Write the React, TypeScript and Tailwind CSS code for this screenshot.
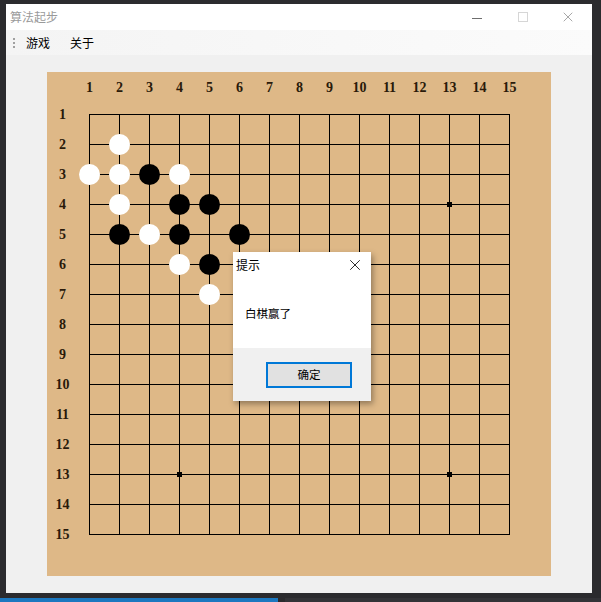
import { X } from 'lucide-react';

const cjk = "font-['Microsoft_YaHei','Noto_Sans_CJK_SC',sans-serif]";

const whites: [number, number][] = [
  [2, 2], [1, 3], [2, 3], [4, 3], [2, 4], [3, 5], [4, 6], [5, 7],
];
const blacks: [number, number][] = [
  [3, 3], [4, 4], [5, 4], [2, 5], [4, 5], [6, 5], [5, 6],
];
const stars: [number, number][] = [
  [4, 4], [13, 4], [8, 8], [4, 13], [13, 13],
];

const pos = (n: number) => 42 + (n - 1) * 30;
const nums = Array.from({ length: 15 }, (_, i) => i + 1);

function Board() {
  return (
    <svg width={504} height={504} className="block" shapeRendering="crispEdges">
      <rect width={504} height={504} fill="#deb887" />
      {nums.map((n) => (
        <g key={n}>
          <line x1={pos(n) + 0.5} y1={42} x2={pos(n) + 0.5} y2={463} stroke="#000" />
          <line x1={42} y1={pos(n) + 0.5} x2={463} y2={pos(n) + 0.5} stroke="#000" />
          <text
            x={pos(n) + 0.5}
            y={15}
            textAnchor="middle"
            dominantBaseline="central"
            fontFamily="'Liberation Serif', serif"
            fontWeight={700}
            fontSize={14}
            fill="#2a1a0a"
          >
            {n}
          </text>
          <text
            x={15.5}
            y={pos(n) + 0.5}
            textAnchor="middle"
            dominantBaseline="central"
            fontFamily="'Liberation Serif', serif"
            fontWeight={700}
            fontSize={14}
            fill="#2a1a0a"
          >
            {n}
          </text>
        </g>
      ))}
      {stars.map(([c, r]) => (
        <rect key={`s${c}-${r}`} x={pos(c) - 2} y={pos(r) - 2} width={5} height={5} fill="#000" />
      ))}
      <g shapeRendering="auto">
        {whites.map(([c, r]) => (
          <circle key={`w${c}-${r}`} cx={pos(c) + 0.5} cy={pos(r) + 0.5} r={10.5} fill="#fff" />
        ))}
        {blacks.map(([c, r]) => (
          <circle key={`b${c}-${r}`} cx={pos(c) + 0.5} cy={pos(r) + 0.5} r={10.5} fill="#000" />
        ))}
      </g>
    </svg>
  );
}

function MessageBox() {
  return (
    <div className={`absolute left-[186px] top-[180px] flex h-[149px] w-[138px] flex-col bg-white shadow-[2px_3px_6px_rgba(0,0,0,0.35)] ${cjk}`}>
      <div className="flex h-[24px] items-center justify-between pl-[3px] pr-[7px] pt-[1px]">
        <span className="text-[12px] leading-none text-black">提示</span>
        <X className="h-[18px] w-[18px] text-black" strokeWidth={1.1} />
      </div>
      <div className="flex h-[72px] items-center pl-[12px] pt-[4px]">
        <span className="text-[11.5px] leading-none text-black">白棋赢了</span>
      </div>
      <div className="flex-1 bg-[#f0f0f0] pl-[33px] pt-[14px]">
        <button className="flex h-[26px] w-[86px] items-center justify-center border-2 border-[#0078d7] bg-[#e1e1e1] text-[11.5px] text-black">
          确定
        </button>
      </div>
    </div>
  );
}

export default function App() {
  return (
    <div className="relative h-[602px] w-[601px] overflow-hidden bg-[#2b2b2e]">
      <div className="ml-[6px] mt-[4px] flex h-[589px] w-[586px] flex-col bg-[#f0f0f0]">
        <div className={`flex h-[26px] items-center bg-white ${cjk}`}>
          <span className="pl-[4px] text-[12px] text-[#9a9a9a]">算法起步</span>
          <div className="ml-auto flex h-full items-center">
            <div className="flex w-[46px] justify-center">
              <span className="mt-[2px] h-px w-[10px] bg-[#6e6e6e]" />
            </div>
            <div className="flex w-[46px] justify-center">
              <span className="h-[10px] w-[10px] border border-[#d6d6d6]" />
            </div>
            <div className="flex w-[46px] justify-center pr-[2px]">
              <X className="h-[16px] w-[16px] text-[#7a7a7a]" strokeWidth={1} />
            </div>
          </div>
        </div>
        <div className={`flex h-[25px] items-center bg-gradient-to-r from-[#f4f4f4] to-[#fbfbfb] ${cjk}`}>
          <div className="ml-[7px] flex w-[3px] flex-col gap-[2px]">
            <span className="h-[2px] w-[2px] bg-[#a0a0a0]" />
            <span className="h-[2px] w-[2px] bg-[#a0a0a0]" />
            <span className="h-[2px] w-[2px] bg-[#a0a0a0]" />
          </div>
          <span className="ml-[10px] text-[12px] text-black">游戏</span>
          <span className="ml-[20px] text-[12px] text-black">关于</span>
        </div>
        <div className="flex-1 pl-[41px] pt-[17px]">
          <div className="relative h-[504px] w-[504px]">
            <Board />
            <MessageBox />
          </div>
        </div>
      </div>
      <div className="mt-[5px] flex h-[4px]">
        <div className="w-[278px] bg-[#1c78c0]" />
        <div className="ml-[7px] flex-1 bg-[#333337]" />
      </div>
    </div>
  );
}
